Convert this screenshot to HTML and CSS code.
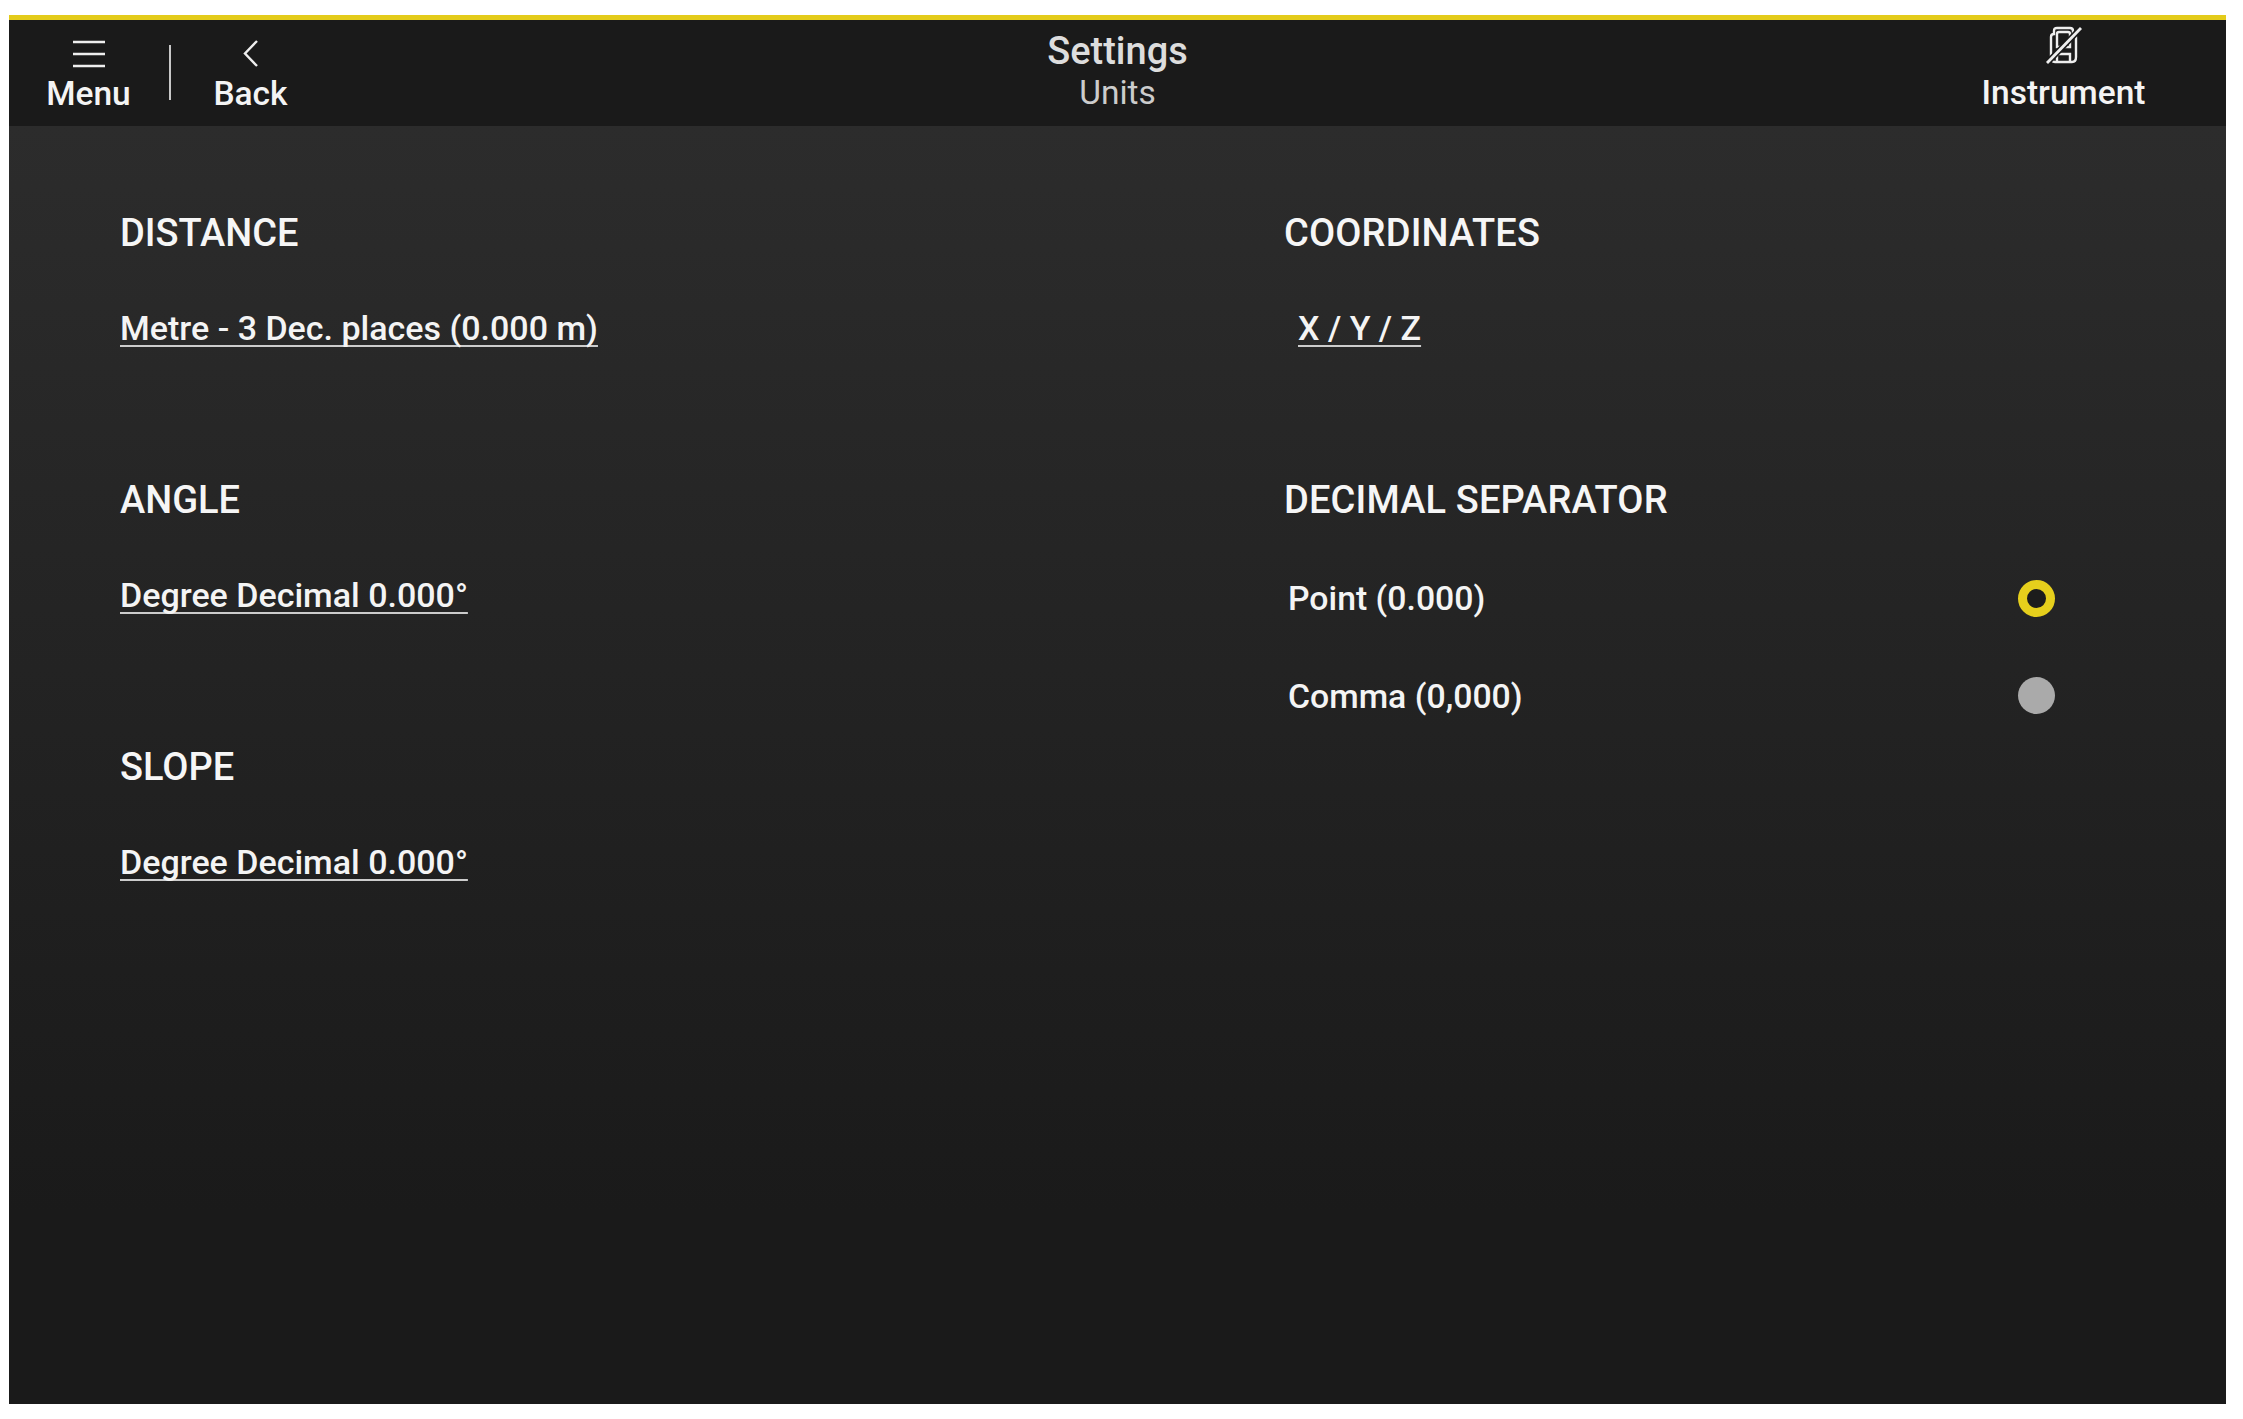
FILE: index.html
```html
<!DOCTYPE html>
<html lang="en">
<head>
	<meta charset="UTF-8">
	<title>Settings - Units</title>
	<link rel="stylesheet" href="styles.css">
</head>
<body>
<div class="screen">
	<div class="topbar">
		<div class="nav_left">
			<a class="nav_btn menu_btn">
				<svg class="nav_icon" width="34" height="30" viewBox="0 0 34 30"><path d="M1 4H33M1 16H33M1 28H33" stroke="#eee" stroke-width="2.6" fill="none"/></svg>
				<span>Menu</span>
			</a>
			<i class="nav_line"></i>
			<a class="nav_btn back_btn">
				<svg class="nav_icon" width="34" height="30" viewBox="0 0 34 30"><path d="M23 3L11 15.500L23 28" stroke="#eee" stroke-width="2.4" fill="none"/></svg>
				<span>Back</span>
			</a>
		</div>
		<div class="title">
			<b>Settings</b>
			<span>Units</span>
		</div>
		<a class="nav_btn inst_btn">
			<svg class="inst_icon" width="38" height="38" viewBox="0 0 38 38">
				<path d="M6 11Q6 8 9 8V5Q9 2 12 2H25Q28 2 28 5V8Q31 8 31 11V31Q31 36 27 36H10Q6 36 6 31Z M12 36V28H25V36 M12 21V8Q12 6 14 6H23Q25 6 25 8V21Z" stroke="#eee" stroke-width="2.400" fill="none"/>
				<path d="M2 37L36 2" stroke="#1a1a1a" stroke-width="6" fill="none"/>
				<path d="M2 37L36 2" stroke="#eee" stroke-width="2.800" fill="none"/>
			</svg>
			<span>Instrument</span>
		</a>
	</div>
	<div class="content">
		<div class="col">
			<div class="group">
				<h2>DISTANCE</h2>
				<a class="val">Metre - 3 Dec. places (0.000 m)</a>
			</div>
			<div class="group">
				<h2>ANGLE</h2>
				<a class="val">Degree Decimal 0.000°</a>
			</div>
			<div class="group">
				<h2>SLOPE</h2>
				<a class="val">Degree Decimal 0.000°</a>
			</div>
		</div>
		<div class="col">
			<div class="group">
				<h2>COORDINATES</h2>
				<a class="val coord">X / Y / Z</a>
			</div>
			<div class="group">
				<h2>DECIMAL SEPARATOR</h2>
				<div class="radio_row">
					<span>Point (0.000)</span>
					<i class="radio on"></i>
				</div>
				<div class="radio_row">
					<span>Comma (0,000)</span>
					<i class="radio"></i>
				</div>
			</div>
		</div>
	</div>
</div>
</body>
</html>
```

FILE: styles.css
```css
* { margin:0; padding:0; box-sizing:border-box;}
html, body { height:100%; background:#fff;}
body { padding:15px 17px 15px 9px; font-family:Roboto, "Liberation Sans", sans-serif; color:#f4f4f4;}

.screen { height:1389px; display:flex; flex-direction:column; background:#1a1a1a;}

.topbar { height:111px; flex:none; display:grid; grid-template-columns:1fr auto 1fr; background:#1a1a1a; border-top:5px solid #e3cb1a;}

.nav_left { display:flex; align-items:flex-start;}
.nav_btn { display:flex; flex-direction:column; align-items:center; font-size:33.500px; font-weight:500; line-height:40px;}
.nav_icon { display:block; margin-top:18px; margin-bottom:6px;}
.menu_btn { width:159px;}
.nav_line { width:2px; height:55px; margin:25px 0 0 1px; background:#c8c8c8;}
.back_btn { width:159px;}

.title { display:flex; flex-direction:column; align-items:center; width:300px;}
.title b { font-size:38px; font-weight:500; line-height:44px; margin-top:9px; color:#ddd;}
.title span { font-size:33.500px; line-height:38px; margin-top:1px; color:#ccc;}

.inst_btn { justify-self:end; width:325px;}
.inst_icon { display:block; margin-top:6px; margin-bottom:9px;}

.content { flex:1; display:grid; grid-template-columns:1164px 1fr; padding:84px 0 0 111px; background:linear-gradient(#2c2c2c, #1a1a1a 85%);}

.group { height:267px;}
.group h2 { font-size:38px; font-weight:500; line-height:46px; color:#f6f6f6;}
.col + .col h2 { letter-spacing:.15px;}
.val { display:block; width:max-content; margin-top:49px; font-size:34px; font-weight:500; line-height:46px; text-decoration:underline; text-decoration-color:#ccc; text-decoration-thickness:2px; text-decoration-skip-ink:none; text-underline-offset:5px; color:#f4f4f4;}
.coord { margin-left:14px;}

.radio_row { display:flex; justify-content:space-between; align-items:center; width:767px; height:46px; margin:52px 0 0 4px; font-size:33.800px; font-weight:500;}
.radio_row + .radio_row { margin-top:52px;}
.radio { width:37px; height:37px; border-radius:50%; background:#aaa; display:block;}
.radio_row + .radio_row .radio { margin-top:-2px;}
.radio.on { background:#1c1c1c; border:9.500px solid #e6cf1c;}
```
